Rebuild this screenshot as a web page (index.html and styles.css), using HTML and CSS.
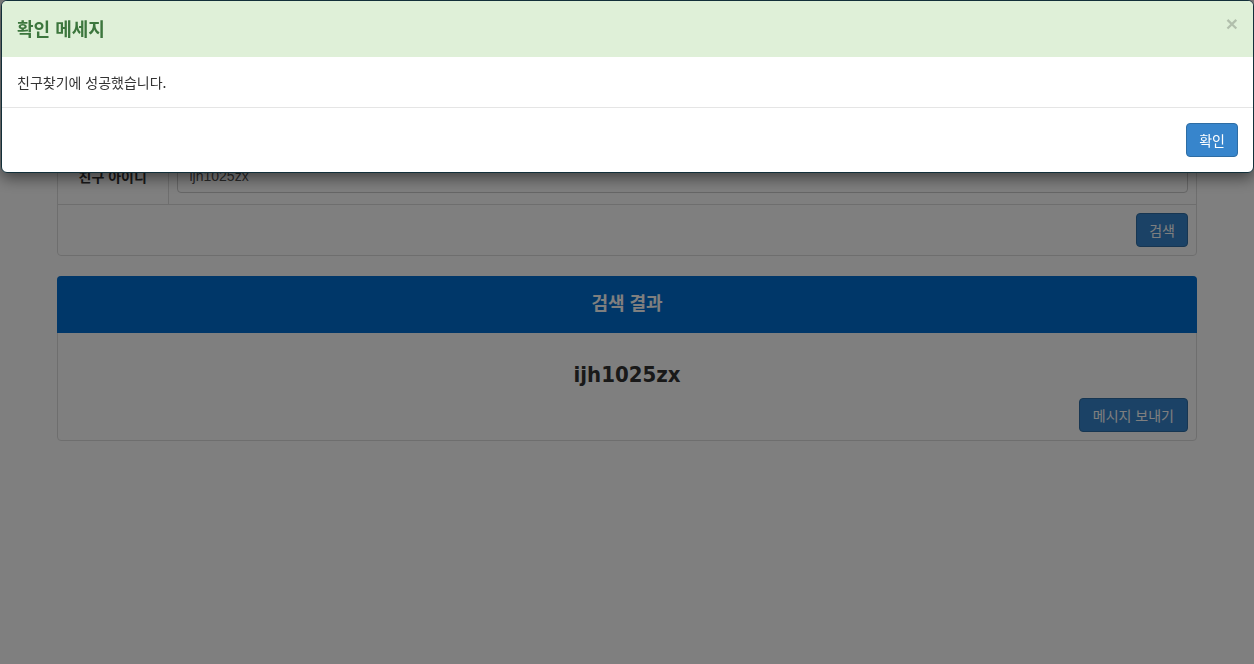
FILE: index.html
```html
<!DOCTYPE html>
<html lang="ko">
<head>
<meta charset="utf-8">
<title>친구찾기</title>
<link rel="stylesheet" href="styles.css">
</head>
<body>
<div class="container">
  <div class="panel">
    <div class="panel-heading search-heading">친구 찾기</div>
    <table class="search-table">
      <tr>
        <th class="label-cell">친구 아이디</th>
        <td class="input-cell"><input class="form-control" type="text" value="ijh1025zx"></td>
      </tr>
      <tr>
        <td class="action-cell" colspan="2"><button class="btn btn-primary">검색</button></td>
      </tr>
    </table>
  </div>

  <div class="panel">
    <div class="panel-heading result-heading">검색 결과</div>
    <div class="panel-body">
      <h3 class="result-name">ijh1025zx</h3>
      <div class="result-actions"><button class="btn btn-primary">메시지 보내기</button></div>
    </div>
  </div>
</div>

<div class="modal-backdrop"></div>
<div class="modal">
  <div class="modal-content">
    <div class="modal-header">
      <button class="close" type="button">&times;</button>
      <h4 class="modal-title">확인 메세지</h4>
    </div>
    <div class="modal-body">친구찾기에 성공했습니다.</div>
    <div class="modal-footer"><button class="btn btn-primary">확인</button></div>
  </div>
</div>
</body>
</html>
```
FILE: styles.css
```css
* { box-sizing: border-box; }
html, body { margin: 0; padding: 0; }
body {
  font-family: "Liberation Sans", Arial, "Noto Sans CJK KR", sans-serif;
  font-size: 14px;
  line-height: 1.42857;
  color: #333;
  background: #fff;
  height: 664px;
  overflow: hidden;
}
.container {
  width: 1170px;
  margin: 0 auto;
  padding: 94px 15px 0;
}
.panel {
  border: 1px solid #ddd;
  border-radius: 4px;
  margin-bottom: 20px;
  background: #fff;
}
.panel-heading {
  height: 56px;
  display: flex;
  align-items: center;
  justify-content: center;
  font-size: 18px;
  font-weight: bold;
  border-radius: 3px 3px 0 0;
}
.search-heading { background: #f5f5f5; color: #333; border-bottom: 1px solid #ddd; }
.result-heading { background: #006ed2; color: #fff; margin: -1px -1px 0; border-radius: 4px 4px 0 0; height: 57px; padding-top: 1px; }
.search-table { width: 100%; border-collapse: collapse; }
.search-table td, .search-table th { padding: 8px; border-top: 1px solid #ddd; vertical-align: middle; }
.search-table tr:first-child th, .search-table tr:first-child td { border-top: 0; }
.search-table .input-cell { padding-bottom: 11px; }
.label-cell {
  width: 110px;
  text-align: center;
  font-size: 14px;
  font-weight: bold;
  border-right: 1px solid #ddd;
}
.form-control {
  display: block;
  width: 100%;
  height: 34px;
  padding: 6px 12px;
  font: inherit;
  color: #555;
  border: 1px solid #ccc;
  border-radius: 4px;
  background: #fff;
}
.action-cell { text-align: right; }
.btn {
  display: inline-block;
  height: 34px;
  padding: 6px 12px;
  font-family: "Noto Sans CJK KR", sans-serif;
  font-size: 14px;
  line-height: 20px;
  border: 1px solid transparent;
  border-radius: 4px;
  cursor: pointer;
}
.btn-primary { background: #3785cc; border-color: #2e6da4; color: #fff; }
.result-actions .btn { padding: 6px 13px; }
.panel-body { padding: 8px; }
.result-name {
  margin: 21px 0 10px;
  text-align: center;
  font-family: "DejaVu Sans Condensed", "DejaVu Sans", sans-serif;
  font-size: 22px;
  line-height: 26px;
  font-weight: bold;
  color: #333;
}
.result-actions { text-align: right; }

.modal-backdrop {
  position: fixed;
  inset: 0;
  background: rgba(0, 0, 0, 0.5);
}
.modal {
  position: fixed;
  top: 0;
  left: 1px;
  right: 0;
}
.modal-content {
  background: #fff;
  border: 1px solid #13303a;
  border-radius: 6px;
  box-shadow: 0 5px 15px rgba(0, 0, 0, 0.5);
  overflow: hidden;
}
.modal-header {
  background: #dff0d8;
  padding: 15px;
}
.modal-title {
  margin: 0;
  font-family: "Noto Sans CJK KR", sans-serif;
  font-size: 18px;
  line-height: 25px;
  font-weight: bold;
  color: #3c763d;
}
.close {
  float: right;
  margin-top: -3px;
  padding: 0;
  background: none;
  border: 0;
  font-family: "Liberation Sans", Arial, sans-serif;
  font-size: 21px;
  font-weight: bold;
  line-height: 1;
  color: #000;
  opacity: 0.2;
}
.modal-body {
  padding: 15px;
  font-family: "Noto Sans CJK KR", sans-serif;
  font-size: 14px;
  line-height: 20px;
  color: #333;
  border-top: 1px solid #dff0d8;
}
.modal-footer {
  padding: 15px;
  text-align: right;
  border-top: 1px solid #e5e5e5;
}
```
